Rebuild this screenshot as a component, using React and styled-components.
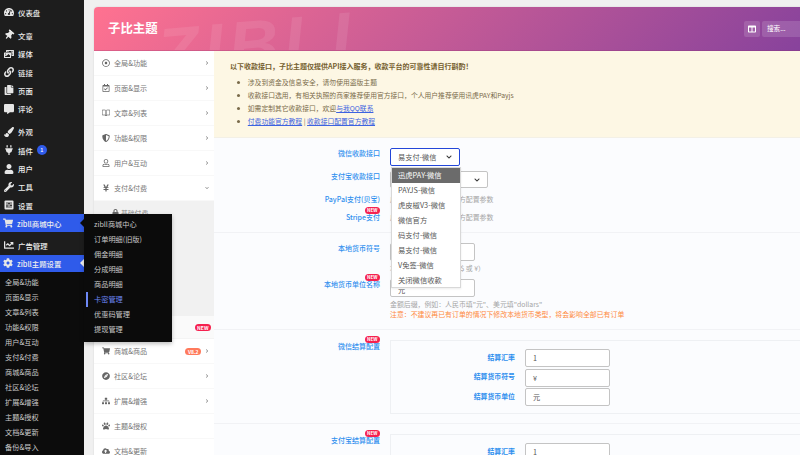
import * as React from 'react';
import styled, { createGlobalStyle } from 'styled-components';
import {
  FaTachometerAlt, FaThumbtack, FaPhotoVideo, FaLink, FaCopy, FaCommentAlt, FaPaintBrush, FaPlug,
  FaUser, FaWrench, FaShoppingCart, FaChartLine, FaCog, FaRegDotCircle, FaRegCalendarCheck,
  FaShieldAlt, FaRegUser, FaYenSign, FaCompass, FaSitemap, FaPaw, FaCloudUploadAlt,
  FaChevronRight, FaChevronDown, FaColumns, FaLock,
} from 'react-icons/fa';
import { FiBookOpen } from 'react-icons/fi';

const FONT = `"Noto Sans CJK SC", "Noto Sans", "Liberation Sans", sans-serif`;

const GlobalStyle = createGlobalStyle`
  html, body { margin: 0; padding: 0; background: #f0f0f0; overflow: hidden; }
  body { font-family: ${FONT}; font-size: 7px; color: #555; }
  * { box-sizing: border-box; }
`;

// =====================================
// ADMIN SIDEBAR
// =====================================

const Page = styled.div`
  display: flex;
  width: 800px;
  height: 455px;
  overflow: hidden;
  position: relative;
`;

const Sidebar = styled.aside`
  flex: 0 0 84px;
  background: #1d1d1d;
  display: flex;
  flex-direction: column;
  padding-top: 3px;
`;

const MenuGroup = styled.div`
  display: flex;
  flex-direction: column;
  margin-bottom: ${(p) => p.$gap || 0}px;
`;

const MenuItem = styled.div`
  position: relative;
  height: ${(p) => p.$height || 18.3}px;
  padding-top: ${(p) => p.$lower || 0}px;
  display: flex;
  align-items: center;
  gap: 4px;
  padding-left: ${(p) => (p.$active ? 3 : 4)}px;
  color: #eeeeee;
  font-size: 7.4px;
  font-weight: 500;
  white-space: nowrap;
  background: ${(p) => (p.$active ? '#2f5bea' : 'transparent')};
  svg { flex: 0 0 10px; width: 10px; height: 10px; color: #e6e6e6; }
  ${(p) => p.$notch && `
    &::after {
      content: '';
      position: absolute;
      right: 0;
      top: 50%;
      margin-top: -4px;
      border: 4px solid transparent;
      border-right-color: ${p.$notch};
      border-left-width: 0;
    }
  `}
`;

const TiltedPin = styled(FaThumbtack)`
  transform: rotate(40deg);
`;

const CountBadge = styled.span`
  width: 10px;
  height: 10px;
  border-radius: 50%;
  background: #2f5bea;
  color: #fff;
  font-size: 5.5px;
  line-height: 10px;
  text-align: center;
`;

const SubMenu = styled.div`
  flex: 1;
  background: #0c0c0c;
  padding-top: 3px;
`;

const SubMenuItem = styled.div`
  height: 15px;
  line-height: 15px;
  padding-left: 5px;
  color: #c9c9c9;
  font-size: 7.2px;
  white-space: nowrap;
`;

const Flyout = styled.div`
  position: absolute;
  left: 84px;
  top: 214px;
  width: 88px;
  height: 128px;
  padding-top: 2.5px;
  background: #0b0b0b;
  box-shadow: 0 2px 4px rgba(0, 0, 0, 0.25);
  z-index: 5;
`;

const FlyoutItem = styled.div`
  position: relative;
  height: 15px;
  line-height: 15px;
  padding-left: 10px;
  font-size: 7.2px;
  white-space: nowrap;
  color: ${(p) => (p.$current ? '#6d88f5' : '#c9c9c9')};
  ${(p) => p.$current && `
    &::before {
      content: '';
      position: absolute;
      left: 2px;
      top: 0;
      width: 2px;
      height: 15px;
      background: #6d88f5;
    }
  `}
`;

// =====================================
// THEME OPTIONS CARD
// =====================================

const Main = styled.main`
  flex: 0 0 auto;
  width: 760px;
  margin: 7px 0 0 10px;
  height: 600px;
`;

const Card = styled.div`
  background: #fff;
  border-radius: 4px 4px 0 0;
  overflow: hidden;
  box-shadow: 0 0 2px rgba(0, 0, 0, 0.12);
`;

const Header = styled.header`
  position: relative;
  height: 44px;
  overflow: hidden;
  display: flex;
  align-items: center;
  justify-content: space-between;
  padding: 0 0 0 14px;
  background: linear-gradient(135deg, #ff7290 0%, #7f3f9d 100%);
  border-bottom: 1px solid rgba(120, 40, 110, 0.25);
`;

const Watermark = styled.div`
  position: absolute;
  left: 62px;
  top: 2px;
  font-family: "Liberation Sans", sans-serif;
  font-weight: 700;
  font-style: italic;
  font-size: 70px;
  letter-spacing: 5px;
  line-height: 1;
  color: rgba(255, 255, 255, 0.09);
  transform: rotate(-5deg);
`;

const Title = styled.h1`
  margin: 0 0 2px;
  color: #fff;
  font-size: 12.4px;
  font-weight: 700;
`;

const HeaderTools = styled.div`
  display: flex;
  gap: 2px;
  width: 110px;
`;

const ToolButton = styled.div`
  flex: 0 0 16px;
  height: 16px;
  border-radius: 2px;
  background: rgba(255, 255, 255, 0.14);
  color: #fff;
  display: flex;
  align-items: center;
  justify-content: center;
  svg { width: 8px; height: 8px; }
`;

const SearchBox = styled.div`
  flex: 1;
  height: 16px;
  line-height: 15px;
  border-radius: 2px;
  padding-left: 5px;
  background: rgba(255, 255, 255, 0.14);
  color: #fff;
  font-size: 6.6px;
`;

const Body = styled.div`
  display: flex;
`;

const Nav = styled.nav`
  flex: 0 0 120px;
  background: #fff;
`;

const NavRow = styled.div`
  height: 25.05px;
  display: flex;
  align-items: center;
  padding: 0 5px 0 8px;
  gap: 4px;
  color: #777;
  font-size: 7.1px;
  border-bottom: 1px solid #f8f8f8;
  svg.lead { flex: 0 0 8px; width: 8px; height: 8px; color: #666; }
  svg.arrow { flex: 0 0 4px; width: 4px; height: 4px; color: #888; }
`;

const NavLabel = styled.span`
  flex: 1;
`;

const SubNav = styled.div`
  background: #f1f1f1;
  height: 115px;
  display: flex;
  flex-direction: column;
`;

const SubNavRow = styled.div`
  height: 23px;
  display: flex;
  align-items: center;
  gap: 2px;
  padding-left: 18px;
  color: #888;
  font-size: 6.8px;
  svg { width: 7px; height: 7px; color: #666; }
`;

const NewNavRow = styled.div`
  height: 23px;
  display: flex;
  align-items: center;
  justify-content: flex-end;
  padding-right: 3px;
  background: #fafafa;
  border-bottom: 1px solid #f4f4f4;
`;

const Tag = styled.span`
  border-radius: 4px;
  height: 7px;
  line-height: 7px;
  padding: 0 2.5px;
  font-size: 5px;
  font-weight: 700;
  color: #fff;
  background: ${(p) => p.$color || '#f5214f'};
`;

const Content = styled.div`
  flex: 1;
  background: #fbfcfe;
  min-width: 0;
`;

const Notice = styled.div`
  height: 87px;
  background: #fdf7e4;
  padding: 8px 16px;
  color: #7a6b4a;
  font-size: 6.8px;
  border-bottom: 1px solid #f3f0e6;
`;

const NoticeTitle = styled.div`
  font-weight: 700;
  font-size: 7px;
  line-height: 14px;
  color: #75602f;
  margin-bottom: 3px;
`;

const NoticeList = styled.ul`
  margin: 0;
  padding: 0 0 0 7px;
  list-style: disc inside;
  li { line-height: 12.9px; white-space: nowrap; }
  a { color: #3d63e0; text-decoration: underline; }
`;

const Section = styled.section`
  padding: ${(p) => p.$pad || '10px 0'};
  border-bottom: 1px solid #f1f2f5;
`;

const Field = styled.div`
  display: grid;
  grid-template-columns: 166px 1fr;
  column-gap: 10px;
  min-height: ${(p) => p.$height || 18}px;
  margin-bottom: ${(p) => p.$gap || 0}px;
`;

const Label = styled.label`
  position: relative;
  justify-self: end;
  align-self: ${(p) => (p.$top ? 'start' : 'center')};
  margin-top: ${(p) => p.$offset || 0}px;
  color: #2f8fee;
  font-size: 7px;
  font-weight: 500;
  line-height: 10px;
  white-space: nowrap;
`;

const NewMark = styled.span`
  position: absolute;
  right: 0;
  top: -5px;
  border-radius: 4px;
  height: 6.5px;
  line-height: 6.5px;
  padding: 0 2.5px;
  font-size: 4.6px;
  font-weight: 700;
  color: #fff;
  background: #f5214f;
`;

const SelectBox = styled.div`
  position: relative;
  width: ${(p) => p.$width}px;
  height: ${(p) => p.$height}px;
  border-radius: 2px;
  border: ${(p) => (p.$focus ? '1.5px solid #2346d8' : '1px solid #c4c4c4')};
  background: #fff;
  display: flex;
  align-items: center;
  justify-content: space-between;
  padding: 0 7px;
  color: #555;
  font-size: 7.2px;
  svg { width: 6px; height: 6px; color: #333; }
`;

const Dropdown = styled.div`
  position: absolute;
  left: 0;
  top: 100%;
  margin-top: 2px;
  width: 70px;
  height: 121px;
  z-index: 3;
  background: #fff;
  border: 1px solid #d8d8d8;
  box-shadow: 0 1px 2px rgba(0, 0, 0, 0.08);
`;

const Option = styled.div`
  height: 15px;
  line-height: 15px;
  padding-left: 6px;
  font-size: 7.3px;
  white-space: nowrap;
  color: ${(p) => (p.$selected ? '#fff' : '#555')};
  background: ${(p) => (p.$selected ? '#6b6b6b' : 'transparent')};
`;

const TextInput = styled.div`
  width: 85px;
  height: 18px;
  border-radius: 2px;
  border: 1px solid #c4c4c4;
  background: #fff;
  padding-left: 7px;
  line-height: ${(p) => (p.$lower ? 20 : 16)}px;
  color: #555;
  font-size: 7.2px;
`;

const Hint = styled.div`
  color: #a5a5a5;
  font-size: 6.9px;
  line-height: 10px;
  white-space: nowrap;
  align-self: ${(p) => (p.$center ? 'center' : 'auto')};
  margin-top: ${(p) => p.$top || 0}px;
`;

const Warning = styled.div`
  color: #ff8a3d;
  font-size: 6.9px;
  line-height: 10px;
  white-space: nowrap;
`;

const SettingsBox = styled.div`
  border: 1px solid #eef0f3;
  border-right: none;
  padding: 8px 0 0;
  height: 74px;
  background: #fbfcfe;
`;

const SubField = styled.div`
  display: grid;
  grid-template-columns: 124px 85px;
  column-gap: 10px;
  align-items: center;
  margin-bottom: 1.7px;
`;

const SubLabel = styled.span`
  justify-self: end;
  color: #2f8fee;
  font-size: 6.9px;
  font-weight: 700;
  margin-bottom: 3px;
`;

// ==========================================

// dashicons style settings square, the package has no match for it
const SettingsIcon = () => (
  <svg viewBox="0 0 20 20">
    <rect x="1" y="1" width="18" height="18" rx="2" fill="#e6e6e6" />
    <path d="M6 4v12M10 4v12M14 4v12" stroke="#1d1d1d" strokeWidth="1.6" />
    <path d="M4.5 12h3M8.5 7h3M12.5 11h3" stroke="#1d1d1d" strokeWidth="2.4" />
  </svg>
);

const topGroups = [
  { gap: 5, items: [[FaTachometerAlt, '仪表盘']] },
  { gap: 5, items: [[TiltedPin, '文章'], [FaPhotoVideo, '媒体'], [FaLink, '链接'], [FaCopy, '页面'], [FaCommentAlt, '评论']] },
  { gap: 0, items: [[FaPaintBrush, '外观'], [FaPlug, '插件', 1], [FaUser, '用户'], [FaWrench, '工具'], [SettingsIcon, '设置']] },
];

const themeSections = ['全局&功能', '页面&显示', '文章&列表', '功能&权限', '用户&互动', '支付&付费', '商城&商品', '社区&论坛', '扩展&增强', '主题&授权', '文档&更新', '备份&导入'];
const flyoutItems = ['zibll商城中心', '订单明细(旧版)', '佣金明细', '分成明细', '商品明细', '卡密管理', '优惠码管理', '提现管理'];
const payOptions = ['迅虎PAY-微信', 'PAYJS-微信', '虎皮椒V3-微信', '微信官方', '码支付-微信', '易支付-微信', 'V免签-微信', '关闭微信收款'];

const navTop = [
  [FaRegDotCircle, '全局&功能'],
  [FaRegCalendarCheck, '页面&显示'],
  [FiBookOpen, '文章&列表'],
  [FaShieldAlt, '功能&权限'],
  [FaRegUser, '用户&互动'],
];

const navBottom = [
  [FaShoppingCart, '商城&商品', 'V8.2', true],
  [FaCompass, '社区&论坛', null, true],
  [FaSitemap, '扩展&增强', null, true],
  [FaPaw, '主题&授权'],
  [FaCloudUploadAlt, '文档&更新'],
];

const SettlementBox = ({ symbol, unit }) => (
  <SettingsBox>
    <SubField><SubLabel>结算汇率</SubLabel><TextInput>1</TextInput></SubField>
    <SubField><SubLabel>结算货币符号</SubLabel><TextInput>{symbol}</TextInput></SubField>
    <SubField><SubLabel>结算货币单位</SubLabel><TextInput>{unit}</TextInput></SubField>
  </SettingsBox>
);

const App = () => {
  return (
    <Page>
      <GlobalStyle />
      <Sidebar>
        {topGroups.map((group, i) => (
          <MenuGroup key={i} $gap={group.gap}>
            {group.items.map(([Icon, text, count]) => (
              <MenuItem key={text}>
                <Icon />
                {text}
                {count && <CountBadge>{count}</CountBadge>}
              </MenuItem>
            ))}
          </MenuGroup>
        ))}
        <MenuItem $active $height={19} $notch="#0b0b0b"><FaShoppingCart />zibll商城中心</MenuItem>
        <MenuItem $height={24} $lower={4}><FaChartLine />广告管理</MenuItem>
        <MenuItem $active $notch="#f0f0f0"><FaCog />zibll主题设置</MenuItem>
        <SubMenu>
          {themeSections.map((s) => <SubMenuItem key={s}>{s}</SubMenuItem>)}
        </SubMenu>
      </Sidebar>

      <Flyout>
        {flyoutItems.map((f) => <FlyoutItem key={f} $current={f === '卡密管理'}>{f}</FlyoutItem>)}
      </Flyout>

      <Main>
        <Card>
          <Header>
            <Watermark>ZIBLL</Watermark>
            <Title>子比主题</Title>
            <HeaderTools>
              <ToolButton><FaColumns /></ToolButton>
              <SearchBox>搜索...</SearchBox>
            </HeaderTools>
          </Header>
          <Body>
            <Nav>
              {navTop.map(([Icon, text]) => (
                <NavRow key={text}>
                  <Icon className="lead" />
                  <NavLabel>{text}</NavLabel>
                  <FaChevronRight className="arrow" />
                </NavRow>
              ))}
              <NavRow>
                <FaYenSign className="lead" />
                <NavLabel>支付&付费</NavLabel>
                <FaChevronDown className="arrow" />
              </NavRow>
              <SubNav>
                <SubNavRow><FaLock />基础付费</SubNavRow>
              </SubNav>
              <NewNavRow><Tag>NEW</Tag></NewNavRow>
              {navBottom.map(([Icon, text, tag, arrow]) => (
                <NavRow key={text}>
                  <Icon className="lead" />
                  <NavLabel>{text}</NavLabel>
                  {tag && <Tag $color="#ff7a5c">{tag}</Tag>}
                  {arrow && <FaChevronRight className="arrow" />}
                </NavRow>
              ))}
            </Nav>
            <Content>
              <Notice>
                <NoticeTitle>以下收款接口，子比主题仅提供API接入服务，收款平台的可靠性请自行斟酌！</NoticeTitle>
                <NoticeList>
                  <li>涉及到资金及信息安全，请勿使用盗版主题</li>
                  <li>收款接口选用，有相关执照的商家推荐使用官方接口，个人用户推荐使用讯虎PAY和Payjs</li>
                  <li>如需定制其它收款接口，欢迎<a>与我QQ联系</a></li>
                  <li><a>付费功能官方教程</a> | <a>收款接口配置官方教程</a></li>
                </NoticeList>
              </Notice>

              <Section $pad="10px 0 6px">
                <Field $gap={5}>
                  <Label $top>微信收款接口</Label>
                  <SelectBox $focus $width={70} $height={18}>
                    易支付-微信<FaChevronDown />
                    <Dropdown>
                      {payOptions.map((o, i) => <Option key={o} $selected={i === 0}>{o}</Option>)}
                    </Dropdown>
                  </SelectBox>
                </Field>
                <Field $gap={1}>
                  <Label $top>支付宝收款接口</Label>
                  <SelectBox $width={98} $height={17}>易支付-支付宝<FaChevronDown /></SelectBox>
                </Field>
                <Field>
                  <Label>PayPal支付(贝宝)</Label>
                  <Hint $center>启用此接口，请填写下方配置参数</Hint>
                </Field>
                <Field>
                  <Label>Stripe支付<NewMark>NEW</NewMark></Label>
                  <Hint $center>启用此接口，请填写下方配置参数</Hint>
                </Field>
              </Section>

              <Section $pad="10px 0 10px">
                <Field $gap={6}>
                  <Label $top>本地货币符号</Label>
                  <div>
                    <TextInput>¥</TextInput>
                    <Hint $top={2}>本地货币的符号（例如 $ 或 ¥）</Hint>
                  </div>
                </Field>
                <Field>
                  <Label $top>本地货币单位名称<NewMark>NEW</NewMark></Label>
                  <div>
                    <TextInput $lower>元</TextInput>
                    <Hint $top={2}>金额后缀，例如：人民币填"元"、美元填"dollars"</Hint>
                    <Warning>注意：不建议再已有订单的情况下修改本地货币类型，将会影响全部已有订单</Warning>
                  </div>
                </Field>
              </Section>

              <Section $pad="10px 0 9px">
                <Field>
                  <Label $top $offset={1}>微信结算配置<NewMark>NEW</NewMark></Label>
                  <SettlementBox symbol="¥" unit="元" />
                </Field>
              </Section>

              <Section $pad="10px 0 10px">
                <Field>
                  <Label $top $offset={1}>支付宝结算配置<NewMark>NEW</NewMark></Label>
                  <SettlementBox symbol="¥" unit="元" />
                </Field>
              </Section>
            </Content>
          </Body>
        </Card>
      </Main>
    </Page>
  );
};

export default App;
